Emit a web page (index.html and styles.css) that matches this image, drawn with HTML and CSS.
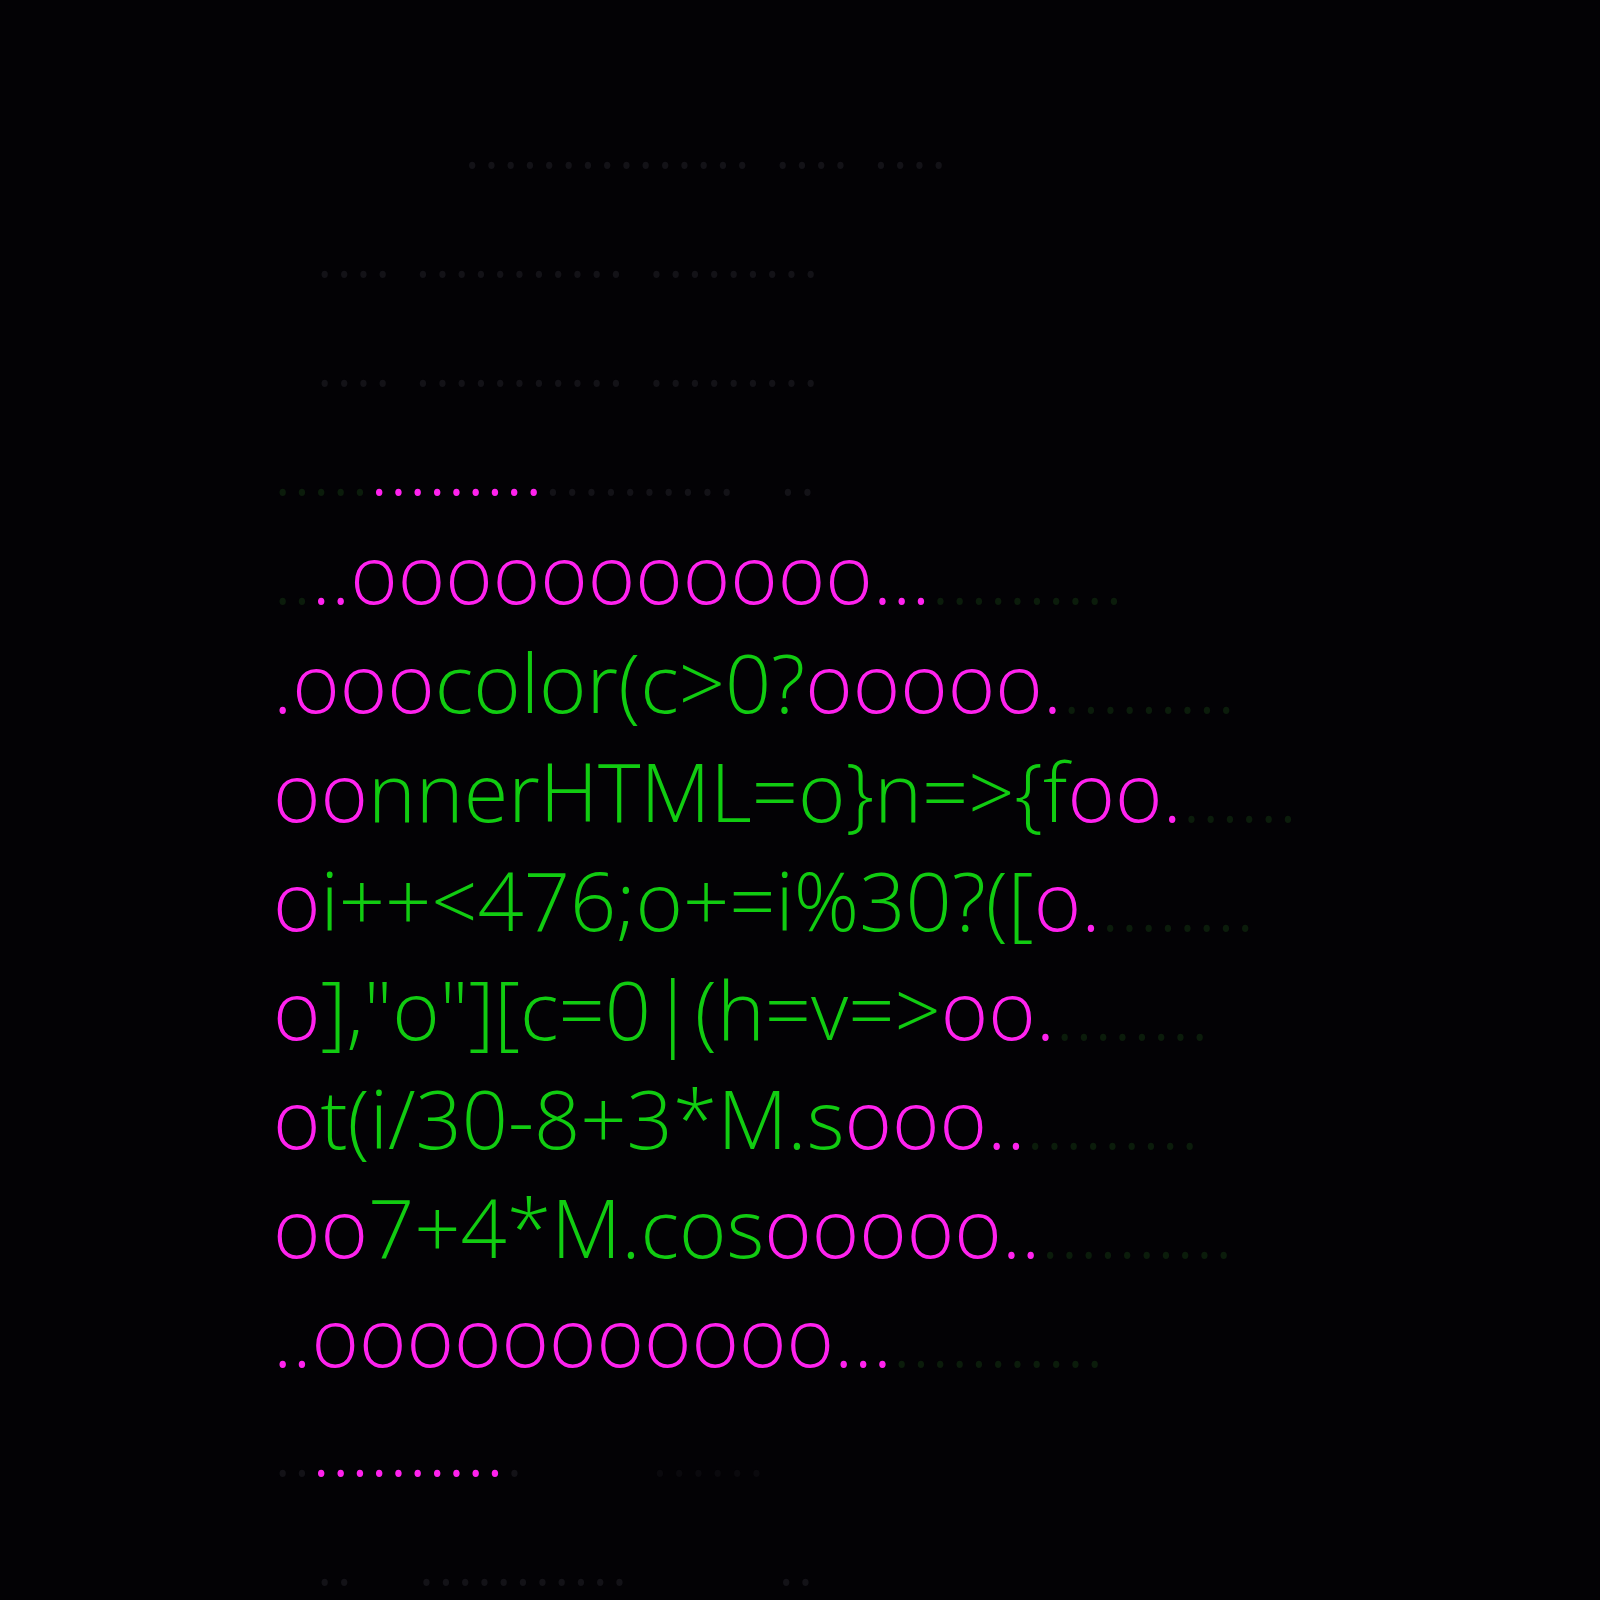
FILE: index.html
```html
<!DOCTYPE html>
<html>
<head>
<meta charset="utf-8">
<link rel="stylesheet" href="styles.css">
</head>
<body>
<div class="screen">
<div class="row">         <span class="dk">...............</span> <span class="dk">....</span> <span class="dk">....</span></div>
<div class="row">  <span class="dk">....</span> <span class="dk">...........</span> <span class="dk">.........</span></div>
<div class="row">  <span class="dk">....</span> <span class="dk">...........</span> <span class="dk">.........</span></div>
<div class="row"><span class="dg">.....</span><span class="m">.........</span><span class="dk">..........</span>  <span class="dk">..</span></div>
<div class="row"><span class="dg">..</span><span class="m">..ooooooooooo...</span><span class="dg">..........</span></div>
<div class="row"><span class="m">.ooo</span><span class="g">color(c&gt;0?</span><span class="m">ooooo.</span><span class="dg">.........</span></div>
<div class="row"><span class="m">oo</span><span class="g">nnerHTML=o}n=&gt;{f</span><span class="m">oo.</span><span class="dg">......</span></div>
<div class="row"><span class="m">o</span><span class="g">i++&lt;476;o+=i%30?([</span><span class="m">o.</span><span class="dg">........</span></div>
<div class="row"><span class="m">o</span><span class="g">],"o"][c=0|(h=v=&gt;</span><span class="m">oo.</span><span class="dg">........</span></div>
<div class="row"><span class="m">o</span><span class="g">t(i/30-8+3*M.s</span><span class="m">ooo..</span><span class="dg">.........</span></div>
<div class="row"><span class="m">oo</span><span class="g">7+4*M.cos</span><span class="m">ooooo..</span><span class="dg">..........</span></div>
<div class="row"><span class="m">..ooooooooooo...</span><span class="dg">...........</span></div>
<div class="row"><span class="dk">..</span><span class="m">..........</span><span class="dk">.</span>      <span class="df">......</span></div>
<div class="row last">  <span class="dk">..</span>   <span class="dk">...........</span>       <span class="dk">..</span></div>
</div>
</body>
</html>
```
FILE: styles.css
```css
html, body {
  margin: 0;
  padding: 0;
  background: #030205;
}
body {
  width: 1600px;
  height: 1600px;
  overflow: hidden;
}
.screen {
  padding: 82px 0 0 273px;
  font-family: "Open Sans", "Noto Sans", sans-serif;
  font-weight: 300;
  font-size: 81px;
  line-height: 109px;
}
.row {
  white-space: pre;
  height: 109px;
}
.row.last {
  height: 100px;
  line-height: 90px;
  padding-top: 10px;
}
.m { color: #ff22ee; }
.g { color: #11cc11; }
.dk { color: #131217; }
.dg { color: #0b1c0b; }
.df { color: #0a090d; }
```
